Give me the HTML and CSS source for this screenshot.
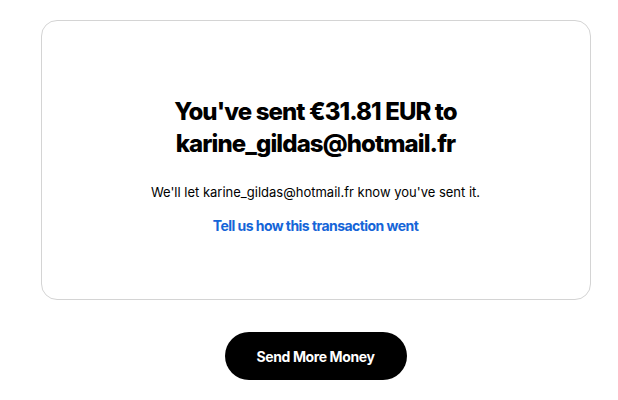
FILE: index.html
```html
<!DOCTYPE html>
<html lang="en">
<head>
    <meta charset="UTF-8" />
    <title>Payment sent</title>
    <link rel="stylesheet" href="styles.css">
</head>
<body>
    <main class="page">
        <section class="confirm-card">
            <h1 class="confirm-title">You've sent €31.81 EUR to<br>karine_gildas@hotmail.fr</h1>
            <p class="confirm-note">We'll let karine_gildas@hotmail.fr know you've sent it.</p>
            <a href="#" class="feedback-link">Tell us how this transaction went</a>
        </section>
        <a href="#" class="send-button">Send More Money</a>
    </main>
</body>
</html>
```

FILE: styles.css
```css
:root {
    --text-color: #000000;
    --link-color: #1565d8;
    --border-color: #d4d4d4;
}
body {
    margin: 0;
    background-color: #ffffff;
    color: var(--text-color);
    font-family: Inter, 'Liberation Sans', sans-serif;
}
.page {
    display: flex;
    flex-direction: column;
    align-items: center;
    padding: 20px 0 0 13px;
}
.confirm-card {
    box-sizing: border-box;
    width: 550px;
    height: 280px;
    border: 1px solid var(--border-color);
    border-radius: 16px;
    display: flex;
    flex-direction: column;
    align-items: center;
    padding-top: 75px;
}
.confirm-title {
    margin: 0;
    font-size: 24px;
    line-height: 32px;
    font-weight: 800;
    letter-spacing: -0.9px;
    text-align: center;
}
.confirm-note {
    margin: 23px 0 0;
    font-size: 13px;
    line-height: 18px;
    letter-spacing: 0;
}
.feedback-link {
    margin-top: 16px;
    color: var(--link-color);
    font-size: 14px;
    line-height: 18px;
    font-weight: 700;
    letter-spacing: -0.55px;
    text-decoration: none;
}
.send-button {
    margin-top: 32px;
    width: 182px;
    height: 48px;
    border-radius: 24px;
    background-color: #000000;
    color: #ffffff;
    display: flex;
    align-items: center;
    justify-content: center;
    font-size: 14px;
    font-weight: 700;
    letter-spacing: -0.4px;
    text-decoration: none;
}
```
